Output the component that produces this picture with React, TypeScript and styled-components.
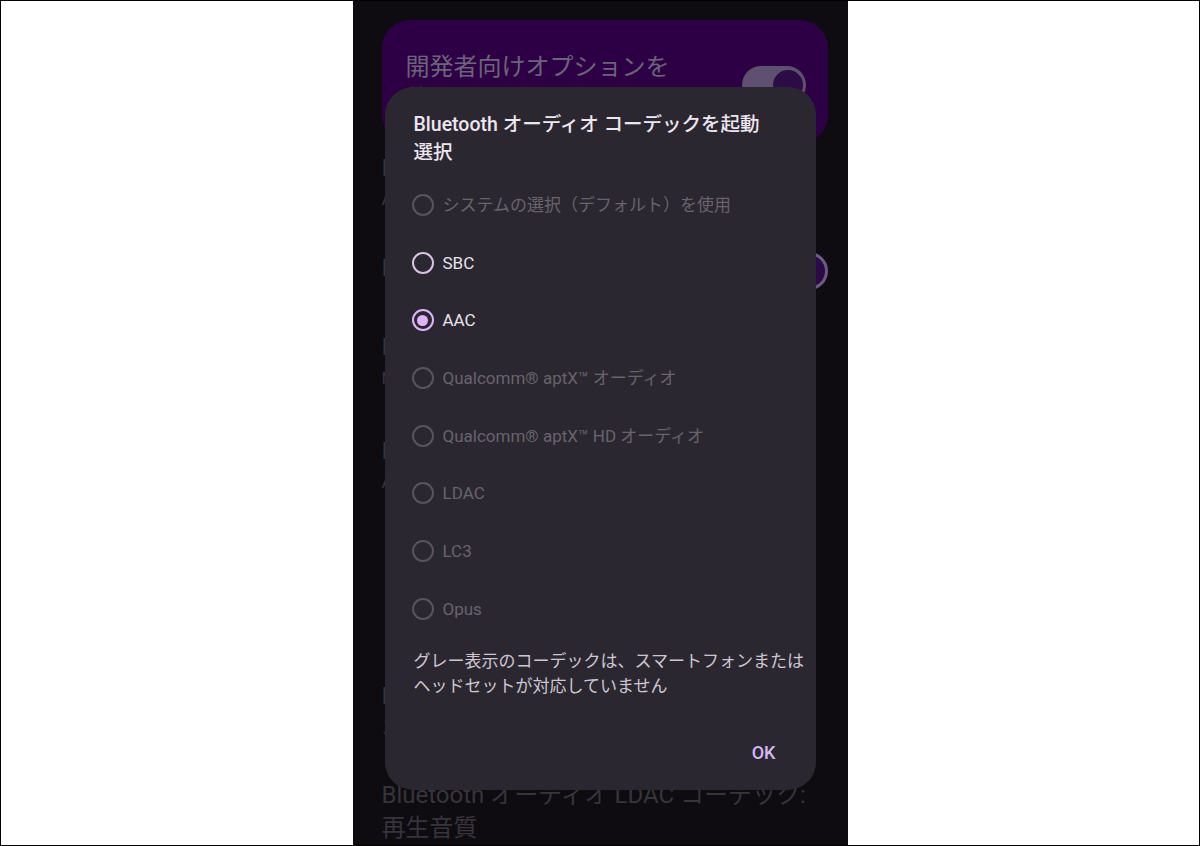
import React from 'react';
import styled, { createGlobalStyle } from 'styled-components';

const GlobalStyle = createGlobalStyle`
  html, body {
    margin: 0;
    padding: 0;
    background: #ffffff;
  }
  body {
    font-family: Roboto, "Noto Sans CJK JP", sans-serif;
  }
`;

const Frame = styled.div`
  width: 1200px;
  height: 846px;
  box-sizing: border-box;
  border: 1px solid #000;
  background: #ffffff;
  display: flex;
  justify-content: center;
  overflow: hidden;
`;

const Screen = styled.div`
  position: relative;
  width: 495px;
  height: 100%;
  box-sizing: border-box;
  padding: 19px 20px 0 29px;
  background: #0e0c11;
  overflow: hidden;
  display: flex;
  flex-direction: column;
`;

const MainCard = styled.div`
  flex: none;
  height: 123px;
  box-sizing: border-box;
  border-radius: 28px;
  background: #2d0046;
  padding: 31px 22px 0 24px;
  display: flex;
  justify-content: space-between;
  align-items: flex-start;
`;

const MainLabel = styled.div`
  font-size: 24px;
  line-height: 32px;
  color: #6c6478;
  white-space: nowrap;
`;

const Switch = styled.div<{ $outlined?: boolean }>`
  position: relative;
  flex: none;
  width: 64px;
  height: 38px;
  box-sizing: border-box;
  border-radius: 19px;
  margin-top: ${(p) => (p.$outlined ? '0' : '15px')};
  background: ${(p) => (p.$outlined ? '#2b0a47' : '#5e5170')};
  border: ${(p) => (p.$outlined ? '3px solid #6b5a82' : 'none')};
`;

const Thumb = styled.span`
  position: absolute;
  right: 3px;
  top: 4px;
  width: 30px;
  height: 30px;
  border-radius: 50%;
  background: #2b0c45;
`;

const BgList = styled.div`
  display: flex;
  flex-direction: column;
  padding-top: 9px;
`;

const BgItem = styled.div<{ $h: number }>`
  flex: none;
  height: ${(p) => p.$h}px;
  display: flex;
  justify-content: space-between;
  align-items: flex-start;
`;

const BgTexts = styled.div`
  display: flex;
  flex-direction: column;
`;

const BgTitle = styled.div`
  font-size: 24px;
  line-height: 33px;
  color: #37343c;
  white-space: nowrap;
`;

const BgSummary = styled.div`
  font-size: 17px;
  line-height: 28px;
  color: #37343c;
  white-space: nowrap;
`;

const Dialog = styled.div`
  position: absolute;
  top: 86px;
  left: 32px;
  width: 431px;
  height: 703px;
  box-sizing: border-box;
  border-radius: 28px;
  background: #2b2730;
  padding: 24px 24px 18px 29px;
  display: flex;
  flex-direction: column;
`;

const DialogTitle = styled.div`
  font-size: 19.5px;
  line-height: 28px;
  font-weight: 500;
  color: #ece6f0;
  white-space: nowrap;
`;

const RadioList = styled.div`
  margin-top: 9px;
  display: flex;
  flex-direction: column;
`;

const RadioRow = styled.div`
  height: 57.7px;
  margin-left: -2px;
  display: flex;
  align-items: center;
  gap: 9px;
`;

const Circle = styled.span<{ $state: 'off' | 'on' | 'checked' }>`
  flex: none;
  width: 22px;
  height: 22px;
  box-sizing: border-box;
  border-radius: 50%;
  border: 2.5px solid
    ${(p) => (p.$state === 'checked' ? '#dcb5f8' : p.$state === 'on' ? '#d6c4df' : '#58545e')};
  display: flex;
  align-items: center;
  justify-content: center;
`;

const Dot = styled.span`
  width: 11px;
  height: 11px;
  border-radius: 50%;
  background: #dcb5f8;
`;

const RadioLabel = styled.span<{ $disabled: boolean }>`
  font-size: 17px;
  line-height: 24px;
  color: ${(p) => (p.$disabled ? '#68636d' : '#e9e3ec')};
  white-space: nowrap;
`;

const Note = styled.div`
  margin-top: 11px;
  font-size: 17px;
  line-height: 25px;
  color: #cdc6d2;
  white-space: nowrap;
`;

const Actions = styled.div`
  margin-top: auto;
  display: flex;
  justify-content: flex-end;
`;

const TextButton = styled.button`
  height: 40px;
  padding: 0 16px;
  border: none;
  background: none;
  font-family: Roboto, "Noto Sans CJK JP", sans-serif;
  font-size: 18px;
  font-weight: 500;
  color: #d4b9f5;
  cursor: pointer;
`;

type Codec = { label: string; state: 'off' | 'on' | 'checked' };

const codecs: Codec[] = [
  { label: 'システムの選択（デフォルト）を使用', state: 'off' },
  { label: 'SBC', state: 'on' },
  { label: 'AAC', state: 'checked' },
  { label: 'Qualcomm® aptX™ オーディオ', state: 'off' },
  { label: 'Qualcomm® aptX™ HD オーディオ', state: 'off' },
  { label: 'LDAC', state: 'off' },
  { label: 'LC3', state: 'off' },
  { label: 'Opus', state: 'off' },
];

// settings rows that sit behind the scrim; only their left edge peeks out
const bgItems = [
  { h: 100, title: ['Bluetooth AVRCP バージョン'], summary: ['AVRCP 1.5（デフォルト）'] },
  { h: 79, title: ['Bluetooth LE Audio を無効にする'], summary: [], toggle: true },
  { h: 104, title: ['Bluetooth MAP バージョン'], summary: ['MAP 1.2（デフォルト）'] },
  { h: 102, title: ['Bluetooth オーディオ コーデック'], summary: ['AAC'] },
  { h: 72, title: [], summary: ['・サンプルレート'] },
  { h: 71, title: [], summary: ['・ビット / サンプル'] },
  { h: 99, title: ['Bluetooth オーディオ チャンネル モード'], summary: ['ステレオ'] },
  { h: 80, title: ['Bluetooth オーディオ LDAC コーデック:', '再生音質'], summary: [] },
];

const App: React.FC = () => {
  return (
    <>
      <GlobalStyle />
      <Frame>
        <Screen>
          <MainCard>
            <MainLabel>
              開発者向けオプションを
              <br />
              使用
            </MainLabel>
            <Switch>
              <Thumb />
            </Switch>
          </MainCard>

          <BgList>
            {bgItems.map((item, i) => (
              <BgItem key={i} $h={item.h}>
                <BgTexts>
                  {item.title.map((t) => (
                    <BgTitle key={t}>{t}</BgTitle>
                  ))}
                  {item.summary.map((s) => (
                    <BgSummary key={s}>{s}</BgSummary>
                  ))}
                </BgTexts>
                {item.toggle && <Switch $outlined />}
              </BgItem>
            ))}
          </BgList>

          <Dialog>
            <DialogTitle>
              Bluetooth オーディオ コーデックを起動
              <br />
              選択
            </DialogTitle>
            <RadioList>
              {codecs.map((c) => (
                <RadioRow key={c.label}>
                  <Circle $state={c.state}>{c.state === 'checked' && <Dot />}</Circle>
                  <RadioLabel $disabled={c.state === 'off'}>{c.label}</RadioLabel>
                </RadioRow>
              ))}
            </RadioList>
            <Note>
              グレー表示のコーデックは、スマートフォンまたは
              <br />
              ヘッドセットが対応していません
            </Note>
            <Actions>
              <TextButton>OK</TextButton>
            </Actions>
          </Dialog>
        </Screen>
      </Frame>
    </>
  );
};

export default App;
